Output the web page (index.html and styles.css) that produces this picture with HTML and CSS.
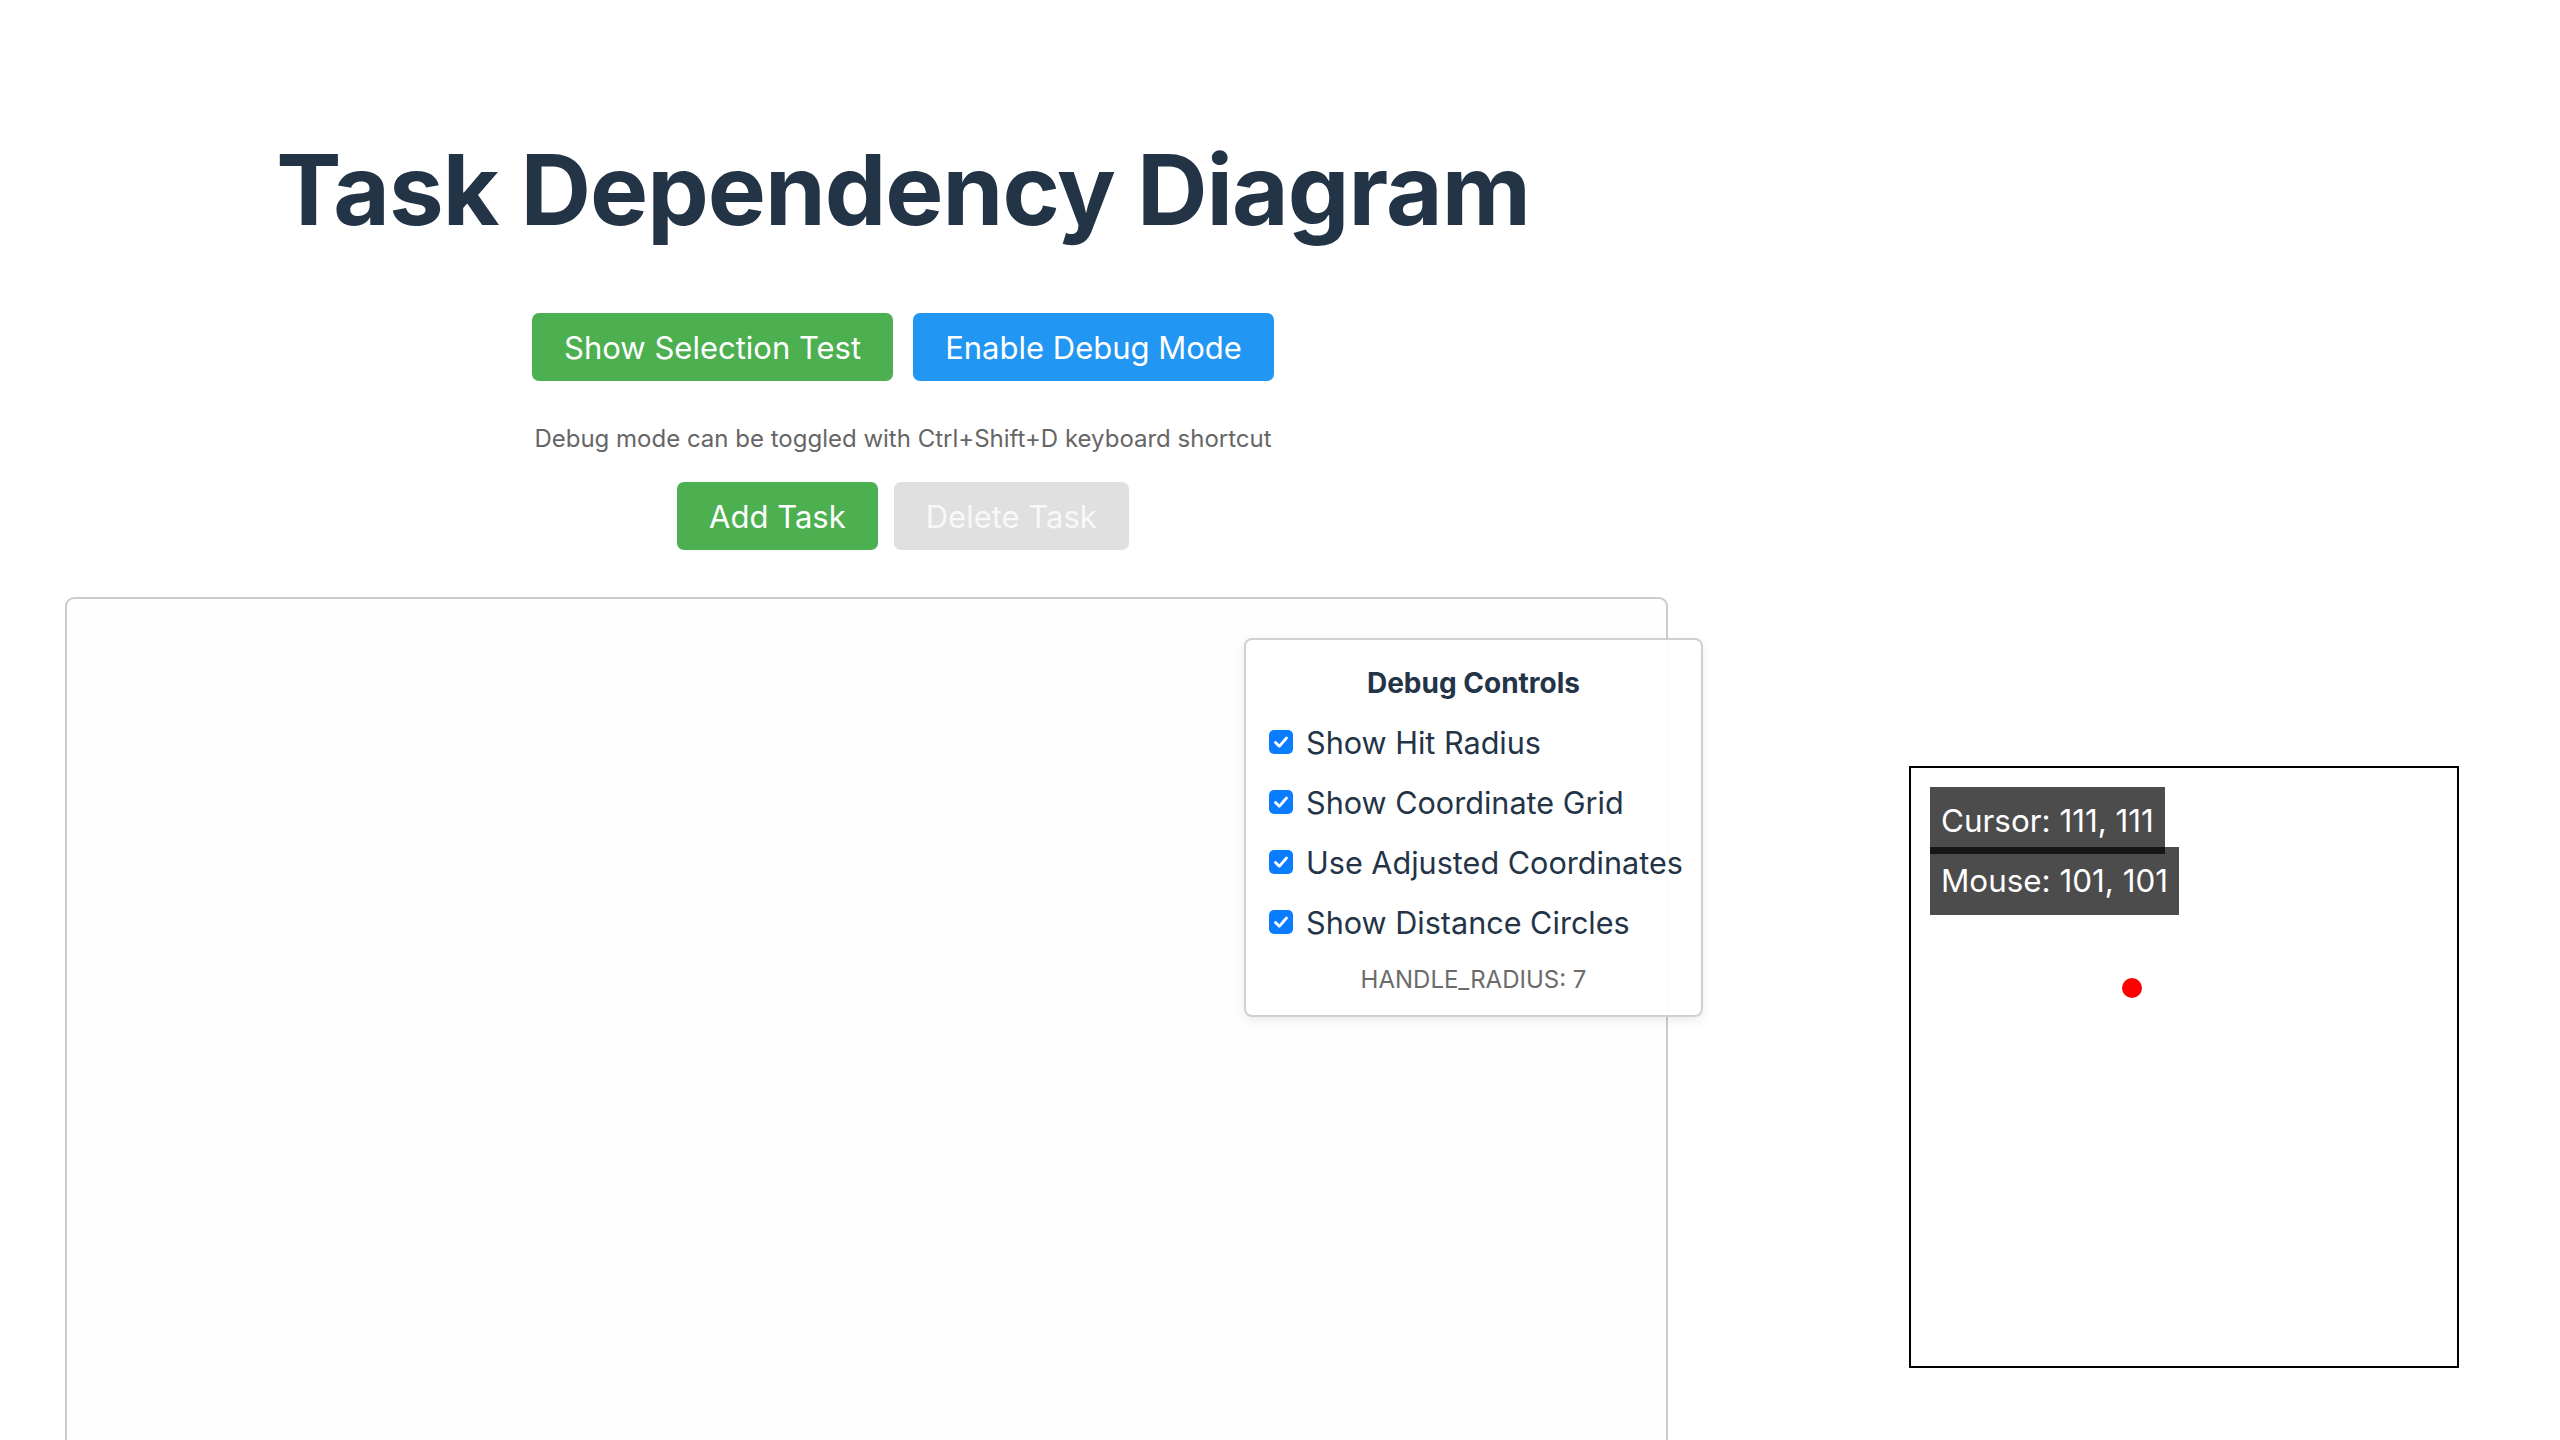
FILE: index.html
```html
<!DOCTYPE html>
<html lang="en">
<head>
<meta charset="utf-8">
<title>Task Dependency Diagram</title>
<link rel="stylesheet" href="styles.css">
</head>
<body>
<div class="page">
  <div class="main">
    <h1 class="title">Task Dependency Diagram</h1>
    <div class="btn-row row-top">
      <button class="btn btn-green">Show Selection Test</button>
      <button class="btn btn-blue">Enable Debug Mode</button>
    </div>
    <p class="note">Debug mode can be toggled with Ctrl+Shift+D keyboard shortcut</p>
    <div class="btn-row row-tasks">
      <button class="btn btn-green">Add Task</button>
      <button class="btn btn-disabled" disabled>Delete Task</button>
    </div>
    <div class="canvas-wrap">
      <div class="debug-panel">
        <div class="debug-title">Debug Controls</div>
        <label class="debug-option"><span class="check"><svg viewBox="0 0 24 24" width="24" height="24"><path d="M6.5 12.5l3.8 3.8L17.5 8" fill="none" stroke="#fff" stroke-width="2.8" stroke-linecap="round" stroke-linejoin="round"/></svg></span>Show Hit Radius</label>
        <label class="debug-option"><span class="check"><svg viewBox="0 0 24 24" width="24" height="24"><path d="M6.5 12.5l3.8 3.8L17.5 8" fill="none" stroke="#fff" stroke-width="2.8" stroke-linecap="round" stroke-linejoin="round"/></svg></span>Show Coordinate Grid</label>
        <label class="debug-option"><span class="check"><svg viewBox="0 0 24 24" width="24" height="24"><path d="M6.5 12.5l3.8 3.8L17.5 8" fill="none" stroke="#fff" stroke-width="2.8" stroke-linecap="round" stroke-linejoin="round"/></svg></span>Use Adjusted Coordinates</label>
        <label class="debug-option"><span class="check"><svg viewBox="0 0 24 24" width="24" height="24"><path d="M6.5 12.5l3.8 3.8L17.5 8" fill="none" stroke="#fff" stroke-width="2.8" stroke-linecap="round" stroke-linejoin="round"/></svg></span>Show Distance Circles</label>
        <div class="debug-radius">HANDLE_RADIUS: 7</div>
      </div>
    </div>
  </div>
  <div class="side">
    <div class="test-box">
      <div class="tag tag-cursor">Cursor: 111, 111</div>
      <div class="tag tag-mouse">Mouse: 101, 101</div>
      <div class="dot"></div>
    </div>
  </div>
</div>
</body>
</html>
```
FILE: styles.css
```css
html, body {
  margin: 0;
  padding: 0;
  background: #ffffff;
}

body {
  font-family: Inter, "Noto Sans", "Liberation Sans", sans-serif;
  color: #243447;
  overflow: hidden;
}

.page {
  display: flex;
  align-items: flex-start;
  padding-left: 65px;
}

.main {
  width: 1676px;
  display: flex;
  flex-direction: column;
  align-items: center;
}

.title {
  margin: 132px 0 0 0;
  font-size: 97.7px;
  line-height: 116px;
  font-weight: 700;
  letter-spacing: -1px;
  color: #233447;
}

.btn-row {
  display: flex;
  gap: 20px;
}

.row-top {
  margin-top: 65px;
}

.row-tasks {
  gap: 16px;
  margin-top: 28px;
}

.btn {
  font-family: Inter, "Noto Sans", "Liberation Sans", sans-serif;
  font-size: 31px;
  height: 68px;
  padding: 0 32px;
  border: none;
  border-radius: 7px;
  color: #ffffff;
  cursor: pointer;
}

.btn-green {
  background: #4caf50;
}

.btn-blue {
  background: #2196f3;
}

.btn-disabled {
  background: #e0e0e0;
  color: #f8f8f8;
  cursor: default;
}

.note {
  margin: 43px 0 0 0;
  font-size: 24px;
  line-height: 30px;
  color: #666666;
}

.canvas-wrap {
  position: relative;
  align-self: flex-start;
  margin-top: 47px;
  width: 1599px;
  height: 900px;
  border: 2px solid #cccccc;
  border-radius: 9px;
  background: #fefefe;
}

.debug-panel {
  position: absolute;
  left: 1177px;
  top: 39px;
  width: 432px;
  height: 375px;
  box-sizing: content-box;
  border: 2px solid #d0d0d0;
  border-radius: 8px;
  background: rgba(255, 255, 255, 0.93);
  box-shadow: 0 4px 12px rgba(0, 0, 0, 0.08);
  display: flex;
  flex-direction: column;
  padding: 0 0 0 23px;
}

.debug-title {
  margin-top: 26px;
  margin-left: -23px;
  text-align: center;
  font-size: 28px;
  line-height: 34px;
  font-weight: 700;
  color: #243447;
}

.debug-option {
  display: flex;
  align-items: center;
  gap: 13px;
  height: 60px;
  font-size: 30.6px;
  color: #243447;
}

.debug-title + .debug-option {
  margin-top: 12px;
}

.check {
  width: 24px;
  height: 24px;
  border-radius: 5px;
  background: #0a7cff;
  display: flex;
}

.debug-radius {
  margin-top: 13px;
  margin-left: -23px;
  text-align: center;
  font-size: 24px;
  line-height: 30px;
  color: #6b6b6b;
}

.side {
  margin-left: 168px;
  margin-top: 766px;
}

.test-box {
  position: relative;
  width: 546px;
  height: 598px;
  border: 2px solid #000000;
}

.tag {
  position: absolute;
  left: 19px;
  height: 67px;
  padding: 0 11px;
  box-sizing: border-box;
  display: flex;
  align-items: center;
  font-size: 31.4px;
  color: #ffffff;
  background: rgba(0, 0, 0, 0.7);
  white-space: nowrap;
}

.tag-cursor {
  top: 19px;
}

.tag-mouse {
  top: 79px;
  height: 68px;
}

.dot {
  position: absolute;
  left: 211px;
  top: 210px;
  width: 20px;
  height: 20px;
  border-radius: 50%;
  background: #ff0000;
}
```
